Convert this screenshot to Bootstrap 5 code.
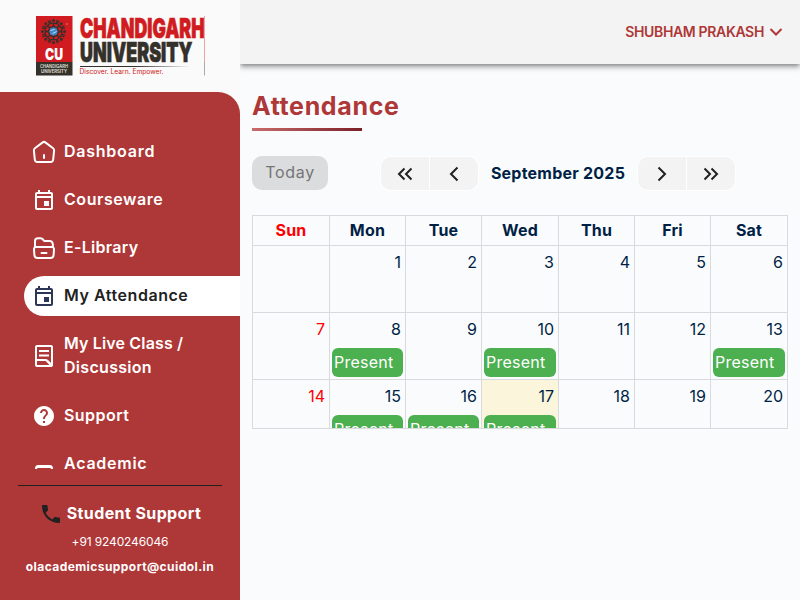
<!DOCTYPE html>
<html lang="en">
<head>
<meta charset="utf-8">
<meta name="viewport" content="width=device-width, initial-scale=1">
<title>Attendance</title>
<link href="https://cdn.jsdelivr.net/npm/bootstrap@5.3.0/dist/css/bootstrap.min.css" rel="stylesheet">
<style>
body{font-family:Inter,"Open Sans",sans-serif;font-size:16px;background:#fafbfd;color:#001f45;height:600px;overflow:hidden}
.side{width:240px;flex:none;background:#fafafa;position:relative;z-index:1}
.brand{height:92px;flex:none}
.panel{background:#ae3737;border-top-right-radius:22px;min-height:0}
.menu{padding:40px 0 0 24px;height:393px;flex:none;overflow:hidden}
.menu-item{height:40px;margin-bottom:8px;padding-left:8px;color:#fff;font-weight:600;line-height:24px;text-decoration:none;border-radius:20px 0 0 20px;flex:none}
.menu-item.tall{height:64px}
.menu-item svg{width:24px;height:24px;flex:none;margin-right:8px}
.menu-item>span{padding-bottom:2px}
.menu-item.current{background:#fff;color:#212121}
.ls-1{letter-spacing:.15px}
.ls-2{letter-spacing:.3px}
.ls-3{letter-spacing:.46px}
.ls-4{letter-spacing:.55px}
.ls-5{letter-spacing:.75px}
.contact{margin:0 18px;border-top:1px solid #212121;padding-top:16px;color:#fff}
.contact .title{letter-spacing:.4px;padding-bottom:1px;margin-top:-1px}
.phone{font-size:12px;line-height:18px;margin-top:7px;letter-spacing:-.13px}
.mail{font-size:12px;line-height:18px;margin:7px -10px 0;font-weight:700;white-space:nowrap;letter-spacing:.43px}
.topbar{height:64px;background:#f3f3f3;box-shadow:0 2px 4px -1px rgba(0,0,0,.35),0 4px 5px rgba(0,0,0,.22);color:#ae3737;font-size:14px;font-weight:600;padding-right:16px;flex:none}
.user{letter-spacing:-.34px;padding-bottom:1px}
.content{padding:24px 12px 0}
.heading{font-size:25px;line-height:36px;font-weight:700;color:#ae3737;margin:0;letter-spacing:.65px}
.rule{width:110px;height:3px;margin-top:4px;background:linear-gradient(90deg,#c96b6b,#7a2028)}
.toolbar{height:34px;margin-top:25px}
.today{width:76px;height:34px;border-radius:10px;background:#dbdcde;color:#757575;border:0;padding:0 0 2px;letter-spacing:.7px;margin-right:52px}
.pager{border:1px solid #fff;border-radius:11px;overflow:hidden;height:35px;width:99px;margin-top:1px}
.pager button{border:0;background:#f3f3f3;padding:0 0 2px;flex:1}
.pager button+button{border-left:1px solid #fff}
.month{width:158px;text-align:center;font-weight:700;letter-spacing:.23px}
.cal{height:214px;margin-top:25px;overflow:hidden;border:1px solid #d9dadd}
.week{display:grid;grid-template-columns:77px 76px 76px 77px 76px 76px 78px;height:67px;border-top:1px solid #d9dadd}
.week.names{height:29px;border-top:0;font-weight:700;text-align:center;line-height:29px;letter-spacing:.2px}
.week>.day:last-child{border-right:1px solid #d9dadd}
.day{border-left:1px solid #d9dadd;min-width:0}
.num{line-height:24px;padding:4px 4px 0 0;text-align:right}
.sun{color:red}
.now{background:#faf5db}
.present{margin:7px 2px 0;height:29px;line-height:28px;border-radius:6px;background:#4caf50;color:#fff;padding-left:2px;white-space:nowrap;letter-spacing:.25px}
</style>
<script src="https://cdn.jsdelivr.net/npm/bootstrap@5.3.0/dist/js/bootstrap.bundle.min.js"></script>
</head>
<body class="d-flex">
<aside class="side d-flex flex-column">
  <div class="brand">
    <svg width="240" height="92" font-family="Inter,sans-serif">
      <defs><linearGradient id="fade"><stop offset=".5" stop-color="#34302a"/><stop offset="1" stop-color="#34302a" stop-opacity="0"/></linearGradient>
      <g id="fig"><circle cx="0" cy="-11" r="1.500"/><path d="M-3.700-11.500L-2.800-8.200H2.800L3.700-11.500M0-8V-6L-2.200-3.500M0-6L2.200-3.500" fill="none" stroke="#34302a" stroke-width="1.300"/></g></defs>
      <path fill="#d01b20" d="M36 16H72.500V62H36z"/><path fill="#34302a" d="M36 62H72.500V75.500H36z"/>
      <g fill="#34302a" transform="translate(53.500 31.500)"><use href="#fig"/><use href="#fig" transform="rotate(45)"/><use href="#fig" transform="rotate(90)"/><use href="#fig" transform="rotate(135)"/><use href="#fig" transform="rotate(180)"/><use href="#fig" transform="rotate(225)"/><use href="#fig" transform="rotate(270)"/><use href="#fig" transform="rotate(315)"/><circle r="4" fill="#3e87c9"/><path d="M-3-1L1-2M-1 2L3 0" stroke="#b9dcf4"/></g>
      <circle cx="67" cy="24" r=".8" fill="#e68a8b"/>
      <text x="45" y="59.500" font-size="15.500" font-weight="900" fill="#fff" textLength="18" lengthAdjust="spacingAndGlyphs">CU</text>
      <g font-size="5" font-weight="600" fill="#e4e2df"><text x="40" y="68" textLength="28" lengthAdjust="spacingAndGlyphs">CHANDIGARH</text><text x="41" y="73.300" textLength="26" lengthAdjust="spacingAndGlyphs">UNIVERSITY</text></g>
      <g font-weight="900" font-size="27.500"><text x="80" y="37.500" fill="#d01b20" stroke="#d01b20" stroke-width=".7" textLength="124.500" lengthAdjust="spacingAndGlyphs">CHANDIGARH</text><text x="80" y="62" fill="#34302a" stroke="#34302a" stroke-width=".7" textLength="112.500" lengthAdjust="spacingAndGlyphs">UNIVERSITY</text></g>
      <path d="M80 66H190V67H80z" fill="url(#fade)"/>
      <text x="79.500" y="74.300" font-size="7" fill="#d01b20" textLength="84" lengthAdjust="spacingAndGlyphs">Discover. Learn. Empower.</text>
      <path d="M204.500 16V62" stroke="#eda3a5"/><path d="M204.500 62V75.500" stroke="#aaa"/>
    </svg>
  </div>
  <div class="panel flex-grow-1">
    <nav class="menu d-flex flex-column">
      <a class="menu-item d-flex align-items-center"><svg viewBox="0 0 24 24" fill="none" stroke="#fff" stroke-width="2" stroke-linecap="round" stroke-linejoin="round"><path d="M10.700 2.400Q12 1.400 13.300 2.400L20.800 8Q22.200 9 22.100 10.500L21.200 19.500Q21 22 18.500 22H5.500Q3 22 2.800 19.500L1.900 10.500Q1.800 9 3.200 8zM12 15V18"/></svg><span class="ls-5">Dashboard</span></a>
      <a class="menu-item d-flex align-items-center"><svg viewBox="0 0 24 24" fill="#fff"><path d="M19 4h-1V2h-2v2H8V2H6v2H5c-1.100 0-2 .9-2 2v14c0 1.100.9 2 2 2h14c1.100 0 2-.9 2-2V6c0-1.100-.9-2-2-2zm0 16H5V10h14v10zm0-12H5V6h14v2zm-7 5h5v5h-5z"/></svg><span class="ls-4">Courseware</span></a>
      <a class="menu-item d-flex align-items-center"><svg viewBox="0 0 24 24" fill="none" stroke="#fff" stroke-width="2" stroke-linecap="round" stroke-linejoin="round"><path d="M3 11V5Q3 2.300 6 2.300H8.500Q10 2.300 11 3.500L12.200 5H17.500Q20.500 5 20.800 8L21 11M4.500 11H19.500Q22.200 11 22 13.500L21.600 19Q21.400 22 18.500 22H5.500Q2.600 22 2.400 19L2 13.500Q1.800 11 4.500 11zM9.500 17H14.500"/></svg><span class="ls-2">E-Library</span></a>
      <a class="menu-item current d-flex align-items-center"><svg viewBox="0 0 24 24" fill="#2c3656"><path d="M19 4h-1V2h-2v2H8V2H6v2H5c-1.100 0-2 .9-2 2v14c0 1.100.9 2 2 2h14c1.100 0 2-.9 2-2V6c0-1.100-.9-2-2-2zm0 16H5V10h14v10zm0-12H5V6h14v2zm-7 5h5v5h-5z"/></svg><span class="ls-4">My Attendance</span></a>
      <a class="menu-item tall d-flex align-items-center"><svg viewBox="0 0 24 24" fill="none" stroke="#fff" stroke-width="2"><rect x="4" y="2" width="16" height="20" rx="1"/><path d="M7 7H17M7 11.500H17M4 16H14L20 22"/><path d="M15 15L20 20V22H18z" fill="#fff" stroke="none"/></svg><span><span class="ls-1">My Live Class /</span><br><span class="ls-2">Discussion</span></span></a>
      <a class="menu-item d-flex align-items-center"><svg viewBox="0 0 24 24" fill="#fff"><path d="M12 2C6.480 2 2 6.480 2 12s4.480 10 10 10 10-4.480 10-10S17.520 2 12 2zm1 17h-2v-2h2v2zm2.070-7.750-.9.920C13.450 12.900 13 13.500 13 15h-2v-.5c0-1.100.45-2.100 1.170-2.830l1.240-1.260c.37-.36.590-.86.590-1.410 0-1.100-.9-2-2-2s-2 .9-2 2H8c0-2.210 1.790-4 4-4s4 1.790 4 4c0 .88-.36 1.680-.93 2.250z"/></svg><span class="ls-3">Support</span></a>
      <a class="menu-item d-flex align-items-center"><svg viewBox="0 0 24 24" fill="#fff"><path d="M3 17Q3 13 6 13H18Q21 13 21 17H19Q19 16 18 16H6Q5 16 5 17z"/></svg><span class="ls-5">Academic</span></a>
    </nav>
    <div class="contact text-center">
      <div class="d-flex align-items-center justify-content-center fw-bold"><svg class="me-1" width="24" height="24" viewBox="0 0 24 24" fill="#212121"><path d="M6.620 10.790c1.440 2.830 3.760 5.140 6.590 6.590l2.200-2.200c.27-.27.670-.36 1.020-.24 1.120.37 2.330.57 3.570.57.55 0 1 .45 1 1V20c0 .55-.45 1-1 1-9.390 0-17-7.610-17-17 0-.55.45-1 1-1h3.500c.55 0 1 .45 1 1 0 1.250.2 2.450.57 3.570.11.35.03.74-.25 1.020l-2.200 2.200z"/></svg><span class="title">Student Support</span></div>
      <div class="phone">+91 9240246046</div>
      <div class="mail">olacademicsupport@cuidol.in</div>
    </div>
  </div>
</aside>
<div class="flex-grow-1 d-flex flex-column">
  <header class="topbar d-flex align-items-center justify-content-end"><span class="user">SHUBHAM PRAKASH</span><svg class="ms-1" width="16" height="16" viewBox="0 0 16 16" fill="none" stroke="#ae3737" stroke-width="2"><path d="M2.500 5L8 10.500L13.500 5"/></svg></header>
  <main class="content">
    <h1 class="heading">Attendance</h1>
    <div class="rule"></div>
    <div class="toolbar d-flex align-items-center">
      <button class="today">Today</button>
      <div class="pager d-flex"><button aria-label="Previous year"><svg width="18" height="18" viewBox="0 0 18 18" fill="none" stroke="#212121" stroke-width="2"><path d="M8.500 3.500L3 9L8.500 14.500M15.500 3.500L10 9L15.500 14.500"/></svg></button><button aria-label="Previous month"><svg width="18" height="18" viewBox="0 0 18 18" fill="none" stroke="#212121" stroke-width="2"><path d="M12.500 2.500L6 9L12.500 15.500"/></svg></button></div>
      <div class="month">September 2025</div>
      <div class="pager d-flex"><button aria-label="Next month"><svg width="18" height="18" viewBox="0 0 18 18" fill="none" stroke="#212121" stroke-width="2"><path d="M5.500 2.500L12 9L5.500 15.500"/></svg></button><button aria-label="Next year"><svg width="18" height="18" viewBox="0 0 18 18" fill="none" stroke="#212121" stroke-width="2"><path d="M2.500 3.500L8 9L2.500 14.500M9.500 3.500L15 9L9.500 14.500"/></svg></button></div>
    </div>
    <div class="cal border-start-0 border-end-0">
      <div class="week names"><div class="day sun">Sun</div><div class="day">Mon</div><div class="day">Tue</div><div class="day">Wed</div><div class="day">Thu</div><div class="day">Fri</div><div class="day">Sat</div></div>
      <div class="week"><div class="day"></div><div class="day"><div class="num">1</div></div><div class="day"><div class="num">2</div></div><div class="day"><div class="num">3</div></div><div class="day"><div class="num">4</div></div><div class="day"><div class="num">5</div></div><div class="day"><div class="num">6</div></div></div>
      <div class="week"><div class="day sun"><div class="num">7</div></div><div class="day"><div class="num">8</div><div class="present">Present</div></div><div class="day"><div class="num">9</div></div><div class="day"><div class="num">10</div><div class="present">Present</div></div><div class="day"><div class="num">11</div></div><div class="day"><div class="num">12</div></div><div class="day"><div class="num">13</div><div class="present">Present</div></div></div>
      <div class="week"><div class="day sun"><div class="num">14</div></div><div class="day"><div class="num">15</div><div class="present">Present</div></div><div class="day"><div class="num">16</div><div class="present">Present</div></div><div class="day now"><div class="num">17</div><div class="present">Present</div></div><div class="day"><div class="num">18</div></div><div class="day"><div class="num">19</div></div><div class="day"><div class="num">20</div></div></div>
    </div>
  </main>
</div>
</body>
</html>
